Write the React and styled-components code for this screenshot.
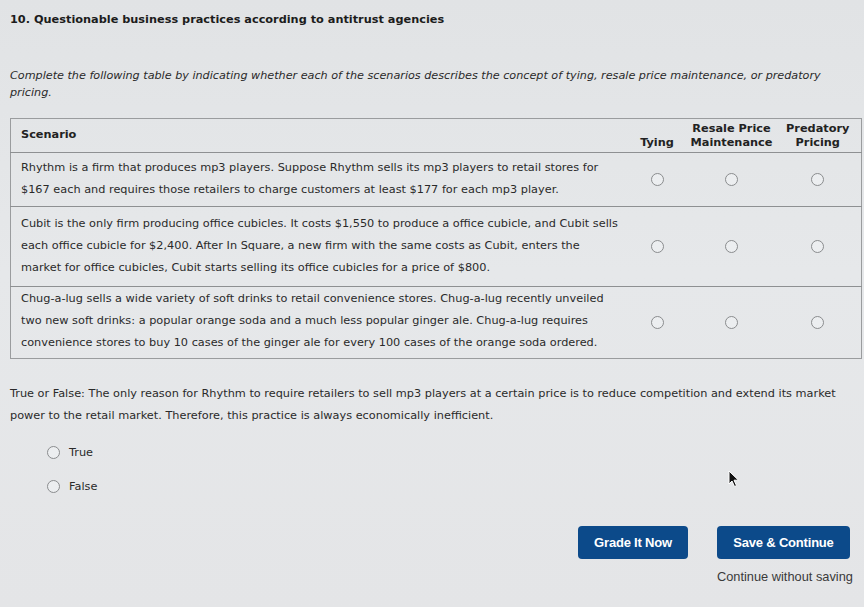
import React from 'react'
import styled, { createGlobalStyle } from 'styled-components'

const GlobalStyle = createGlobalStyle`
  html, body {
    margin: 0;
    padding: 0;
    background: #e3e5e7;
  }
  body {
    font-family: "DejaVu Sans", Verdana, sans-serif;
    color: #222;
  }
`;

const Page = styled.div`
  position: relative;
  width: 864px;
  height: 607px;
  overflow: hidden;
  box-sizing: border-box;
  padding: 13px 3px 0 10px;
  background: linear-gradient(180deg, #e1e3e5 0%, #e6e8ea 45%, #e4e5e7 100%);
`;

const Title = styled.h1`
  margin: 0;
  font-size: 11.3px;
  font-weight: bold;
  color: #1c1c1c;
`;

const Instructions = styled.p`
  margin: 41px 0 0;
  font-size: 11.2px;
  font-style: italic;
  line-height: 17px;
  color: #2a2a2a;
`;

const Table = styled.table`
  margin-top: 17px;
  width: 851px;
  table-layout: fixed;
  border-collapse: collapse;
  border: 1px solid #9a9c9e;
  font-size: 11.3px;
`;

const HeadCell = styled.th`
  box-sizing: border-box;
  height: 34px;
  padding: 0 ${p => (p.$first ? '10px' : '0')} 2px;
  text-align: ${p => (p.$first ? 'left' : 'center')};
  vertical-align: ${p => (p.$first ? 'middle' : 'bottom')};
  width: ${p => p.$width}px;
  font-weight: bold;
  line-height: 14px;
  color: #222;
  white-space: nowrap;
  border-bottom: 1px solid #8e9092;
`;

const Row = styled.tr`
  border-top: 1px solid #8e9092;
`;

const TextCell = styled.td`
  padding: ${p => p.$pad};
  vertical-align: middle;
  line-height: 22px;
  color: #2a2a2a;
`;

const Line = styled.div`
  white-space: nowrap;
`;

const RadioCell = styled.td`
  text-align: center;
  vertical-align: middle;
`;

const Radio = styled.span`
  display: inline-block;
  flex: none;
  width: 11px;
  height: 11px;
  border-radius: 50%;
  border: 1px solid #8a8c8e;
  background: #eceef0;
  vertical-align: middle;
`;

const Question = styled.p`
  margin: 24px 0 0;
  font-size: 11.3px;
  line-height: 22px;
  color: #2a2a2a;
`;

const Options = styled.div`
  margin: 19px 0 0 37px;
  display: flex;
  flex-direction: column;
  gap: 21px;
`;

const Option = styled.label`
  display: flex;
  align-items: center;
  gap: 9px;
  font-size: 11.3px;
  color: #2a2a2a;
`;

const Footer = styled.div`
  margin-top: 33px;
  display: flex;
  justify-content: flex-end;
  align-items: flex-start;
  gap: 29px;
  padding-right: 11px;
`;

const ButtonGroup = styled.div`
  display: flex;
  flex-direction: column;
  align-items: flex-start;
  gap: 10px;
`;

const Button = styled.button`
  width: ${p => p.$width}px;
  height: 33px;
  border: none;
  border-radius: 4px;
  background: #0c4a8a;
  color: #fff;
  font-family: "Liberation Sans", Arial, sans-serif;
  font-weight: bold;
  font-size: 13px;
  letter-spacing: -0.2px;
  cursor: pointer;
`;

const SkipLink = styled.span`
  font-family: "Liberation Sans", Arial, sans-serif;
  font-size: 12.8px;
  color: #3a3a3a;
  margin-right: -8px;
`;

const Cursor = styled.svg`
  position: absolute;
  left: 728px;
  top: 470px;
`;

const columns = [
  { label: ['Scenario'], width: 615 },
  { label: ['Tying'], width: 63 },
  { label: ['Resale Price', 'Maintenance'], width: 86 },
  { label: ['Predatory', 'Pricing'], width: 87 },
];

const scenarios = [
  {
    pad: '4px 10px 5px 10px',
    lines: [
      'Rhythm is a firm that produces mp3 players. Suppose Rhythm sells its mp3 players to retail stores for',
      '$167 each and requires those retailers to charge customers at least $177 for each mp3 player.',
    ],
  },
  {
    pad: '6px 10px 7px 10px',
    lines: [
      'Cubit is the only firm producing office cubicles. It costs $1,550 to produce a office cubicle, and Cubit sells',
      'each office cubicle for $2,400. After In Square, a new firm with the same costs as Cubit, enters the',
      'market for office cubicles, Cubit starts selling its office cubicles for a price of $800.',
    ],
  },
  {
    pad: '1px 10px 4px 10px',
    lines: [
      'Chug-a-lug sells a wide variety of soft drinks to retail convenience stores. Chug-a-lug recently unveiled',
      'two new soft drinks: a popular orange soda and a much less popular ginger ale. Chug-a-lug requires',
      'convenience stores to buy 10 cases of the ginger ale for every 100 cases of the orange soda ordered.',
    ],
  },
];

export default function App() {
  return (
    <Page>
      <GlobalStyle />
      <Title>10. Questionable business practices according to antitrust agencies</Title>
      <Instructions>
        Complete the following table by indicating whether each of the scenarios describes the concept of tying, resale price maintenance, or predatory
        <br />
        pricing.
      </Instructions>

      <Table>
        <thead>
          <tr>
            {columns.map((col, i) => (
              <HeadCell key={i} $first={i === 0} $width={col.width}>
                {col.label.map(l => <div key={l}>{l}</div>)}
              </HeadCell>
            ))}
          </tr>
        </thead>
        <tbody>
          {scenarios.map((s, r) => (
            <Row key={r}>
              <TextCell $pad={s.pad}>
                {s.lines.map((l, i) => <Line key={i}>{l}</Line>)}
              </TextCell>
              {[0, 1, 2].map(c => (
                <RadioCell key={c}>
                  <Radio />
                </RadioCell>
              ))}
            </Row>
          ))}
        </tbody>
      </Table>

      <Question>
        True or False: The only reason for Rhythm to require retailers to sell mp3 players at a certain price is to reduce competition and extend its market
        <br />
        power to the retail market. Therefore, this practice is always economically inefficient.
      </Question>

      <Options>
        <Option><Radio />True</Option>
        <Option><Radio />False</Option>
      </Options>

      <Footer>
        <Button $width={110}>Grade It Now</Button>
        <ButtonGroup>
          <Button $width={133}>Save &amp; Continue</Button>
          <SkipLink>Continue without saving</SkipLink>
        </ButtonGroup>
      </Footer>

      <Cursor width="12" height="18" viewBox="0 0 12 18">
        <path d="M1 1 L1 14 L4 11 L6.5 16.5 L8.5 15.6 L6 10.2 L10.5 10.2 Z" fill="#111" stroke="#fff" strokeWidth="1" />
      </Cursor>
    </Page>
  );
}
